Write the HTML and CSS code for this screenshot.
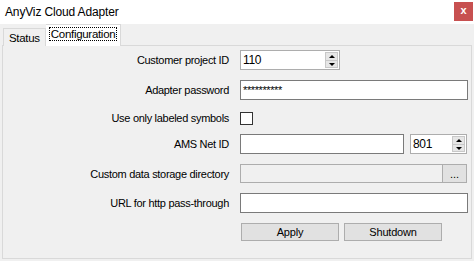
FILE: index.html
```html
<!DOCTYPE html>
<html lang="en">
<head>
  <meta charset="UTF-8" />
  <title>AnyViz Cloud Adapter</title>
  <link rel="stylesheet" href="styles.css">
</head>
<body>
  <div class="window">
    <div class="titlebar">
      <span class="title">AnyViz Cloud Adapter</span>
      <div class="close">x</div>
    </div>

    <div class="tabs">
      <div class="tab">Status</div>
      <div class="tab active"><span class="focus">Configuration</span></div>
    </div>

    <div class="panel">
      <div class="form">
        <label>Customer project ID</label>
        <div class="field">
          <div class="spin w100">
            <span class="val">110</span>
            <div class="arrows"><span class="up"></span><span class="down"></span></div>
          </div>
        </div>

        <label>Adapter password</label>
        <div class="field">
          <div class="box full"><span class="val pw">**********</span></div>
        </div>

        <label>Use only labeled symbols</label>
        <div class="field">
          <div class="check"></div>
        </div>

        <label>AMS Net ID</label>
        <div class="field row">
          <div class="box ams"></div>
          <div class="spin port">
            <span class="val">801</span>
            <div class="arrows"><span class="up"></span><span class="down"></span></div>
          </div>
        </div>

        <label>Custom data storage directory</label>
        <div class="field row">
          <div class="box disabled dir"></div>
          <div class="browse">...</div>
        </div>

        <label>URL for http pass-through</label>
        <div class="field">
          <div class="box full"></div>
        </div>

        <div></div>
        <div class="field row buttons">
          <div class="btn">Apply</div>
          <div class="btn">Shutdown</div>
        </div>
      </div>
    </div>
  </div>
</body>
</html>
```

FILE: styles.css
```css
body {
  margin: 0;
  background-color: #f0f0f0;
  font-family: "Liberation Sans", Arial, sans-serif;
  font-size: 11px;
  color: #000;
}

.window {
  width: 474px;
  height: 261px;
  overflow: hidden;
}

.titlebar {
  height: 24px;
  background-color: #fff;
  display: flex;
  align-items: center;
  justify-content: space-between;
}

.title {
  font-size: 12px;
  letter-spacing: -0.15px;
  margin-left: 5px;
  margin-top: -1px;
}

.close {
  width: 19px;
  height: 19px;
  margin-right: 1px;
  margin-top: -1px;
  background-color: #c75050;
  color: #fff;
  font-weight: bold;
  font-size: 11px;
  line-height: 17px;
  text-align: center;
}

/* tabs */
.tabs {
  display: flex;
  align-items: flex-end;
  height: 21px;
  padding-left: 3px;
  position: relative;
  z-index: 1;
}

.tab {
  height: 17px;
  line-height: 18px;
  padding: 0 5px 0 5px;
  border: 1px solid #d9d9d9;
  border-bottom: none;
  background-color: #f0f0f0;
  font-size: 11.5px;
  letter-spacing: -0.3px;
  margin-bottom: -1px;
}

.tab.active {
  height: 21px;
  line-height: 19px;
  background-color: #fff;
  border-left: none;
  padding: 0 3px 0 3px;
}

.focus {
  border: 1px dotted #000;
  padding: 0 1px;
}

/* panel */
.panel {
  margin-left: 2px;
  width: 468px;
  height: 212px;
  border: 1px solid #d9d9d9;
  background-color: #f0f0f0;
}

.form {
  display: grid;
  grid-template-columns: 226px 1fr;
  grid-template-rows: 30px 28px 26px 30px 29px 30px 18px;
  column-gap: 11px;
  padding-top: 4px;
  padding-right: 2px;
}

label {
  text-align: right;
  line-height: 20px;
  font-size: 11px;
  letter-spacing: -0.3px;
}

.field {
  height: 20px;
}

.row {
  display: flex;
}

.box {
  height: 18px;
  border: 1px solid #7a7a7a;
  background-color: #fff;
}

.full {
  width: 226px;
}

.ams {
  width: 162px;
}

.dir {
  width: 201px;
  height: 17px;
}

.disabled {
  background-color: #f0f0f0;
  border-color: #adadad;
}

.val {
  display: inline-block;
  padding-left: 2px;
  line-height: 18px;
  font-size: 12px;
  letter-spacing: -0.3px;
}

.pw {
  font-size: 11px;
  letter-spacing: -0.4px;
}

.spin {
  height: 18px;
  border: 1px solid #adadad;
  background-color: #fff;
  display: flex;
  justify-content: space-between;
}

.w100 {
  width: 98px;
}

.port {
  width: 55px;
  margin-left: 6px;
}

.arrows {
  width: 13px;
  margin: 1px 1px 1px 0;
  display: flex;
  flex-direction: column;
  border: 1px solid #c8c8c8;
  box-sizing: border-box;
}

.arrows span {
  flex: 1;
  background-color: #e6e6e6;
  position: relative;
}

.arrows .up {
  border-bottom: 1px solid #c8c8c8;
}

.arrows span::after {
  content: "";
  position: absolute;
  left: 3px;
  top: 2px;
  border-left: 3px solid transparent;
  border-right: 3px solid transparent;
}

.arrows .up::after {
  border-bottom: 3px solid #000;
}

.arrows .down::after {
  border-top: 3px solid #000;
}

.check {
  width: 11px;
  height: 11px;
  border: 1px solid #333;
  background-color: #fff;
  margin-top: 4px;
}

.browse {
  width: 23px;
  height: 17px;
  border: 1px solid #adadad;
  border-left: none;
  background-color: #e1e1e1;
  text-align: center;
  line-height: 18px;
  font-size: 11px;
}

.buttons {
  gap: 5px;
  padding-left: 1px;
}

.btn {
  width: 96px;
  height: 16px;
  border: 1px solid #adadad;
  background-color: #e1e1e1;
  text-align: center;
  line-height: 17px;
  font-size: 11px;
  letter-spacing: -0.2px;
}
```
